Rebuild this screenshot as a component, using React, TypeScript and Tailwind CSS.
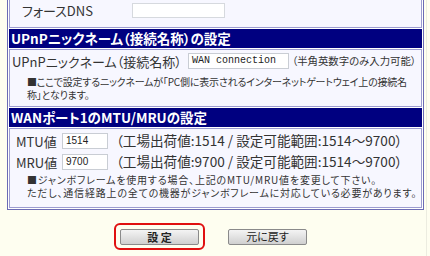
const jp = "font-['Noto_Sans_CJK_JP','Noto_Sans',sans-serif] [font-feature-settings:'palt']";

const Header = ({ children }: { children: React.ReactNode }) => (
  <div className="h-[19px] bg-[#000080] flex items-center pl-[2px] text-white font-bold text-[13.5px] leading-none whitespace-nowrap">
    {children}
  </div>
);

const Cell = ({ children, className = '' }: { children: React.ReactNode; className?: string }) => (
  <div className={`border border-[#9c9cd0] bg-[#f7f7ff] overflow-hidden ${className}`}>{children}</div>
);

const Field = ({ value, className }: { value: string; className: string }) => (
  <div
    className={`h-[16px] shrink-0 bg-white border border-[#c9cdd4] flex items-center pl-[3px] text-[10px] leading-none text-[#222] ${className}`}
  >
    {value}
  </div>
);

const Note = ({ lines, className }: { lines: string[]; className: string }) => (
  <div className={`pl-[25px] -indent-[8px] text-[10px] text-[#333] whitespace-nowrap ${className}`}>
    {lines.map((l) => (
      <div key={l}>{l}</div>
    ))}
  </div>
);

export default function App() {
  return (
    <div className={`w-[430px] h-[256px] overflow-hidden bg-[#fefef0] ${jp}`}>
      <div className="flex h-full">
        <div className="pl-[7px]">
          <div className="w-[417px] border border-t-0 border-[#6b6bb5] bg-white px-px pb-px flex flex-col gap-px">
            <Cell className="h-[28px] border-t-0 flex items-start pt-[3px] pl-[12px]">
              <div className="w-[110px] h-[15px] flex items-center text-[13px] leading-none text-[#333]">フォースDNS</div>
              <div className="w-[93px] h-[15px] bg-white border border-[#d6d9de]" />
            </Cell>

            <Header>UPnPニックネーム（接続名称）の設定</Header>

            <Cell className="h-[58px] pt-[3px]">
              <div className="flex items-center h-[16px] pl-[2px] whitespace-nowrap leading-none">
                <div className="w-[176px] shrink-0 text-[13px] text-[#333]">UPnPニックネーム（接続名称）</div>
                <Field value="WAN connection" className="w-[101px] font-['Liberation_Mono',monospace]" />
                <div className="ml-[3px] text-[10.4px] text-[#333]">（半角英数字のみ入力可能）</div>
              </div>
              <div className="pt-[6px]">
                <Note
                  className="tracking-[-0.2px] leading-[13px]"
                  lines={[
                    '■ここで設定するニックネームが「PC側に表示されるインターネットゲートウェイ上の接続名',
                    '称」となります。',
                  ]}
                />
              </div>
            </Cell>

            <Header>WANポート1のMTU/MRUの設定</Header>

            <Cell className="h-[80px] pt-[4px]">
              <div className="flex flex-col gap-[5px] pl-[6px] whitespace-nowrap leading-none">
                <div className="flex items-center h-[16px]">
                  <div className="w-[46px] shrink-0 text-[13px] text-[#333]">MTU値</div>
                  <Field value="1514" className="w-[46px] font-['Liberation_Sans',sans-serif]" />
                  <div className="ml-[8px] text-[13.6px] text-[#333]">（工場出荷値:1514 / 設定可能範囲:1514〜9700）</div>
                </div>
                <div className="flex items-center h-[16px]">
                  <div className="w-[46px] shrink-0 text-[13px] text-[#333]">MRU値</div>
                  <Field value="9700" className="w-[46px] font-['Liberation_Sans',sans-serif]" />
                  <div className="ml-[8px] text-[13.6px] text-[#333]">（工場出荷値:9700 / 設定可能範囲:1514〜9700）</div>
                </div>
              </div>
              <div className="pt-[4px]">
                <Note
                  className="tracking-[0.8px] leading-[12.5px]"
                  lines={[
                    '■ジャンボフレームを使用する場合、上記のMTU/MRU値を変更して下さい。',
                    'ただし、通信経路上の全ての機器がジャンボフレームに対応している必要があります。',
                  ]}
                />
              </div>
            </Cell>
          </div>

          <div className="flex items-center pl-[107px] mt-[13px] gap-[23px]">
            <div className="border-2 border-[#e01010] rounded-[6px] px-[4px] pt-[4px] pb-[3px]">
              <button className="block w-[79px] h-[16px] rounded-[2px] border border-[#8a8a8a] bg-gradient-to-b from-[#f4f4f4] to-[#d0d0d0] text-[11px] leading-none text-[#222] font-bold">
                設 定
              </button>
            </div>
            <button className="block w-[79px] h-[16px] rounded-[2px] border border-[#8a8a8a] bg-gradient-to-b from-[#f4f4f4] to-[#d0d0d0] text-[11px] leading-none text-[#222]">
              元に戻す
            </button>
          </div>
        </div>
        <div className="ml-[2px] w-px h-full bg-[#ecece0]" />
      </div>
    </div>
  );
}
